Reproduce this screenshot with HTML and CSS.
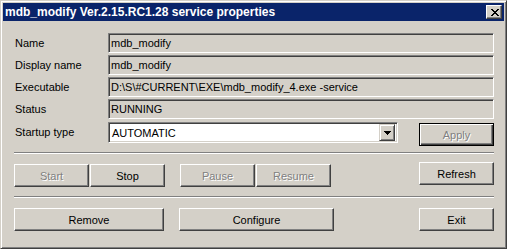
FILE: index.html
```html
<!DOCTYPE html>
<html lang="en">
<head>
  <meta charset="UTF-8" />
  <title>mdb_modify service properties</title>
  <link rel="stylesheet" href="styles.css">
</head>
<body>
  <div class="window">
    <div class="titlebar">
      <span class="title">mdb_modify Ver.2.15.RC1.28 service properties</span>
      <span class="close-btn">
        <svg width="8" height="7" viewBox="0 0 8 7" shape-rendering="crispEdges">
          <path d="M0 0h2v1h-2zM6 0h2v1h-2zM1 1h2v1h-2zM5 1h2v1h-2zM2 2h4v1h-4zM3 3h2v1h-2zM2 4h4v1h-4zM1 5h2v1h-2zM5 5h2v1h-2zM0 6h2v1h-2zM6 6h2v1h-2z" fill="#000"/>
        </svg>
      </span>
    </div>
    <div class="content">
      <div class="props">
        <span class="label">Name</span>
        <div class="field">mdb_modify</div>
        <span class="label">Display name</span>
        <div class="field">mdb_modify</div>
        <span class="label">Executable</span>
        <div class="field">D:\S\#CURRENT\EXE\mdb_modify_4.exe -service</div>
        <span class="label">Status</span>
        <div class="field">RUNNING</div>
      </div>
      <div class="startup-row">
        <span class="label">Startup type</span>
        <div class="combo">
          <span class="combo-text">AUTOMATIC</span>
          <span class="combo-arrow">
            <svg width="7" height="4" viewBox="0 0 7 4" shape-rendering="crispEdges">
              <path d="M0 0h7v1h-7zM1 1h5v1h-5zM2 2h3v1h-3zM3 3h1v1h-1z" fill="#000"/>
            </svg>
          </span>
        </div>
        <span class="btn btn-default disabled">Apply</span>
      </div>
      <div class="separator"></div>
      <div class="button-row">
        <span class="btn disabled">Start</span>
        <span class="btn btn-stop">Stop</span>
        <span class="btn btn-pause disabled">Pause</span>
        <span class="btn btn-resume disabled">Resume</span>
        <span class="btn btn-right btn-refresh">Refresh</span>
      </div>
      <div class="separator"></div>
      <div class="button-row">
        <span class="btn btn-wide">Remove</span>
        <span class="btn btn-configure">Configure</span>
        <span class="btn btn-right">Exit</span>
      </div>
    </div>
  </div>
</body>
</html>
```

FILE: styles.css
```css
* { box-sizing: border-box; }
body {
  margin: 0;
  background: #d4d0c8;
  font-family: 'Liberation Sans', Arial, sans-serif;
  font-size: 11px;
  color: #000;
}
.window {
  width: 507px; height: 249px;
  background: #d4d0c8;
  border: 1px solid; border-color: #d4d0c8 #404040 #404040 #d4d0c8;
  box-shadow: inset 1px 1px #fff, inset -1px -1px #808080;
  padding: 2px;
}
.titlebar {
  height: 18px;
  background: #0a246a;
  display: flex; align-items: center; justify-content: space-between;
  padding: 0 2px 0 2px;
}
.title { color: #fff; font-weight: bold; font-size: 12px; letter-spacing: 0; }
.close-btn {
  width: 16px; height: 14px;
  background: #d4d0c8;
  border: 1px solid; border-color: #fff #404040 #404040 #fff;
  box-shadow: inset -1px -1px #808080;
  display: flex; align-items: center; justify-content: center;
  padding-left: 1px;
}
.content { padding: 12px 10px 0 11px; }
.props {
  display: grid;
  grid-template-columns: 94px 1fr;
  row-gap: 2px;
  align-items: center;
}
.label { padding-left: 1px; }
.field {
  height: 20px;
  border: 1px solid; border-color: #808080 #fff #fff #808080;
  box-shadow: inset 1px 1px #404040;
  padding: 0 0 0 2px;
  line-height: 18px;
  white-space: nowrap;
}
.startup-row {
  display: flex; align-items: flex-start;
  margin-top: 3px;
}
.startup-row .label { width: 94px; line-height: 21px; }
.combo {
  width: 290px; height: 21px;
  background: #fff;
  border: 1px solid; border-color: #808080 #fff #fff #808080;
  box-shadow: inset 1px 1px #404040, inset -1px -1px #d4d0c8;
  display: flex; align-items: center; justify-content: space-between;
  padding: 2px;
}
.combo-text { padding-left: 1px; }
.combo-arrow {
  width: 16px; height: 17px;
  background: #d4d0c8;
  border: 1px solid; border-color: #d4d0c8 #404040 #404040 #d4d0c8;
  box-shadow: inset 1px 1px #fff, inset -1px -1px #808080;
  display: flex; align-items: center; justify-content: center;
}
.btn {
  width: 75px; height: 23px;
  background: #d4d0c8;
  border: 1px solid; border-color: #fff #404040 #404040 #fff;
  box-shadow: inset -1px -1px #808080;
  display: flex; align-items: center; justify-content: center;
}
.btn-default {
  margin-left: auto; margin-top: 1px;
  border-color: #000;
  box-shadow: inset 1px 1px #fff, inset -1px -1px #404040, inset -2px -2px #808080;
}
.disabled { color: #808080; text-shadow: 1px 1px 0 #fff; }
.separator {
  height: 2px;
  border-top: 1px solid #808080; border-bottom: 1px solid #fff;
  margin: 6px 0 0 0;
}
.button-row { display: flex; align-items: flex-start; margin: 10px 0 9px 0; }
.btn-stop { margin-left: 1px; }
.btn-pause { margin-left: 15px; }
.btn-resume { margin-left: 1px; }
.btn-right { margin-left: auto; }
.btn-refresh { margin-top: -2px; }
.btn-wide { width: 150px; }
.btn-configure { width: 155px; margin-left: 15px; }
```
